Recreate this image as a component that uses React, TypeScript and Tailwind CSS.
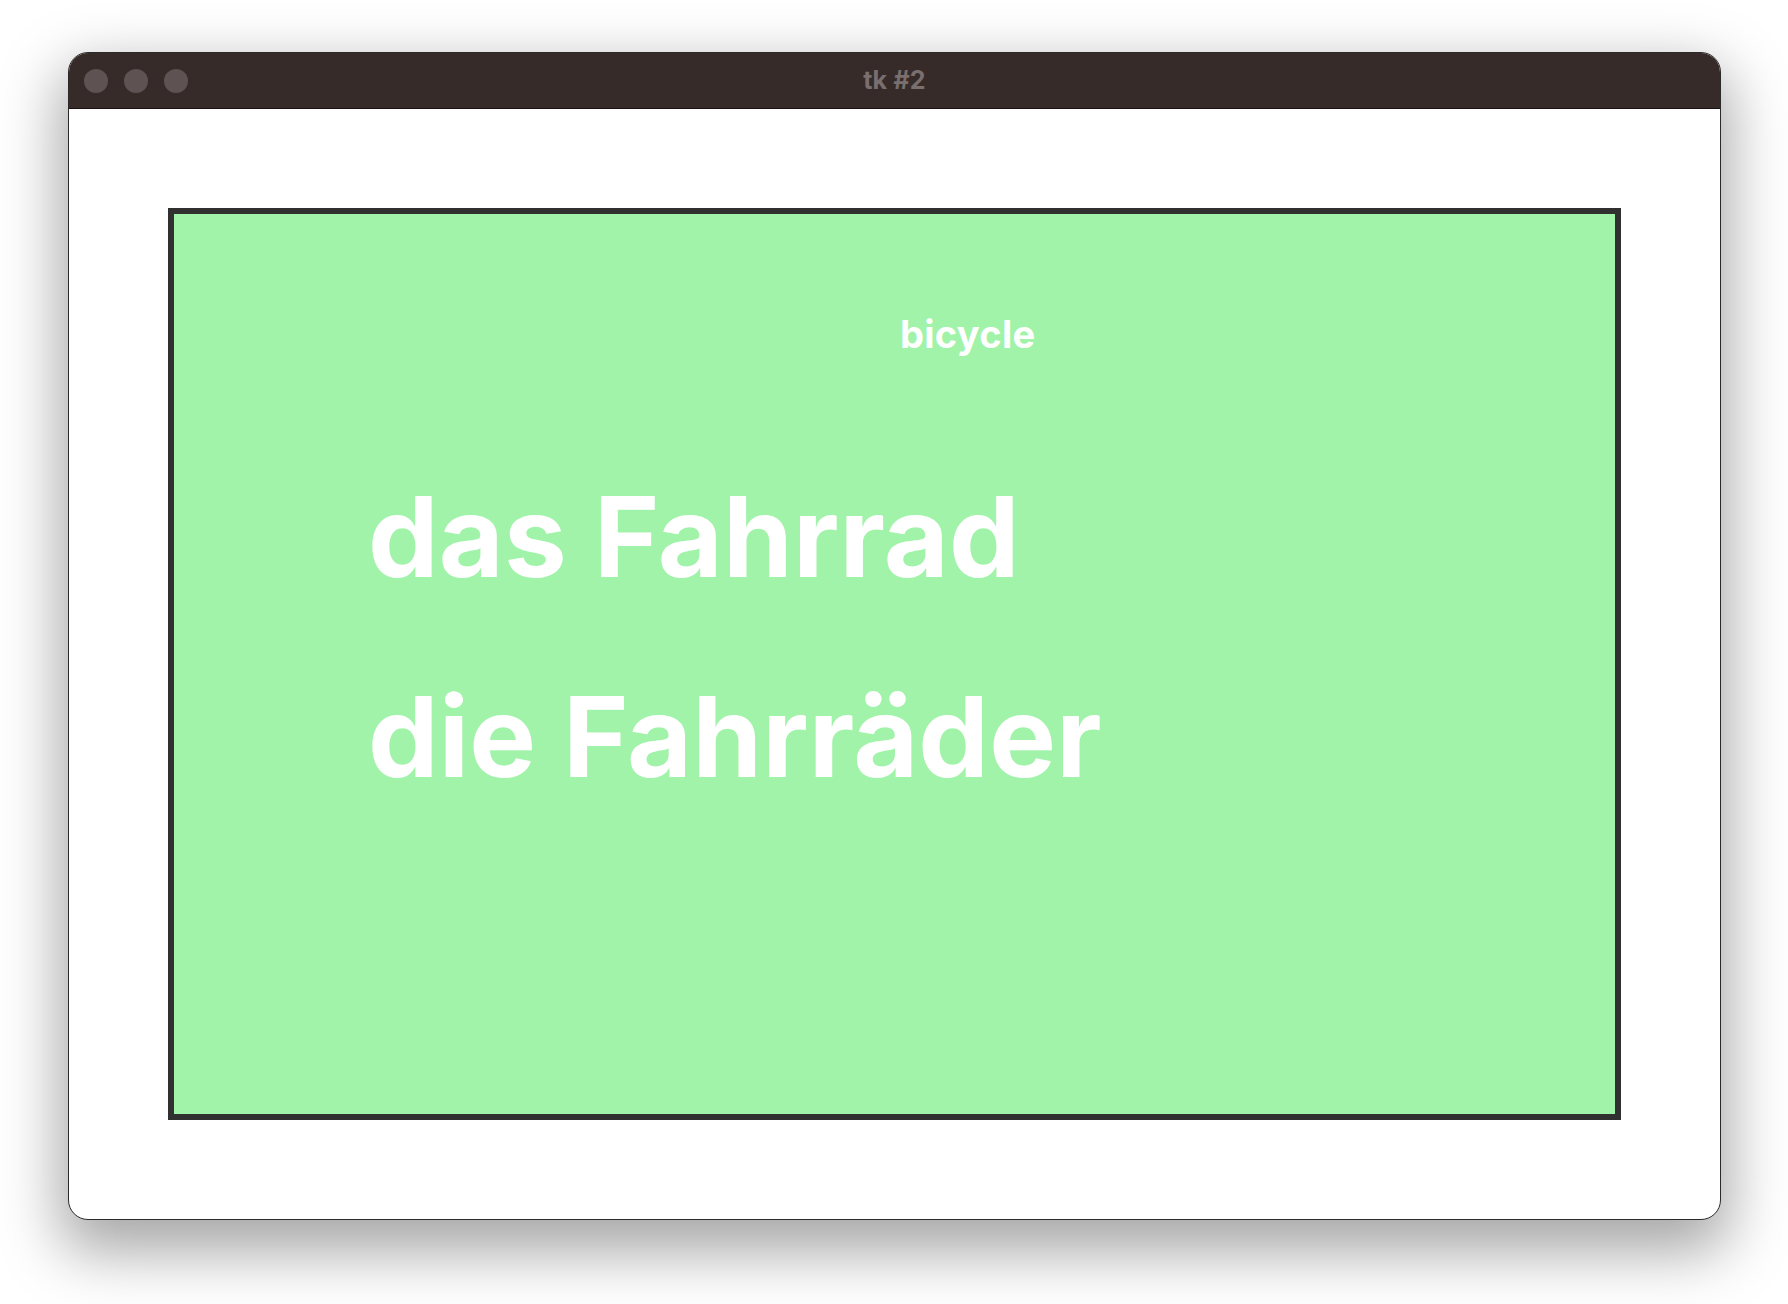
export default function App() {
  return (
    <div className="w-[1788px] h-[1304px] bg-white relative" style={{ fontFamily: "Inter, 'Noto Sans', sans-serif" }}>
      <div className="absolute left-[68px] top-[52px] w-[1653px] h-[1168px] rounded-[20px] overflow-hidden border border-[#2a2a2a] bg-white shadow-[0_24px_60px_8px_rgba(0,0,0,0.35)] flex flex-col">
        <div className="h-[56px] shrink-0 bg-[#372b2a] border-b border-[#1a1212] relative flex items-center">
          <div className="flex items-center gap-[16px] pl-[15px]">
            <div className="w-[24px] h-[24px] rounded-full bg-[#5e5352]" />
            <div className="w-[24px] h-[24px] rounded-full bg-[#5e5352]" />
            <div className="w-[24px] h-[24px] rounded-full bg-[#5e5352]" />
          </div>
          <div className="absolute inset-0 flex items-center justify-center text-[25px] font-bold text-[#786f6e] leading-none pb-[1px] tracking-[0.2px]">
            tk #2
          </div>
        </div>
        <div className="flex-1 p-[99px] pt-[99px]">
          <div className="w-full h-full border-[6px] border-[#303030] bg-[#a1f3a9] flex flex-col">
            <div className="pt-[101px] pl-[726px] text-[38px] leading-none font-bold text-white tracking-[0.3px]">
              bicycle
            </div>
            <div className="mt-[83px] pl-[194px] text-[112px] leading-[200px] font-bold text-white tracking-[0.2px]">
              <div>das Fahrrad</div>
              <div>die Fahrräder</div>
            </div>
          </div>
        </div>
      </div>
    </div>
  );
}
